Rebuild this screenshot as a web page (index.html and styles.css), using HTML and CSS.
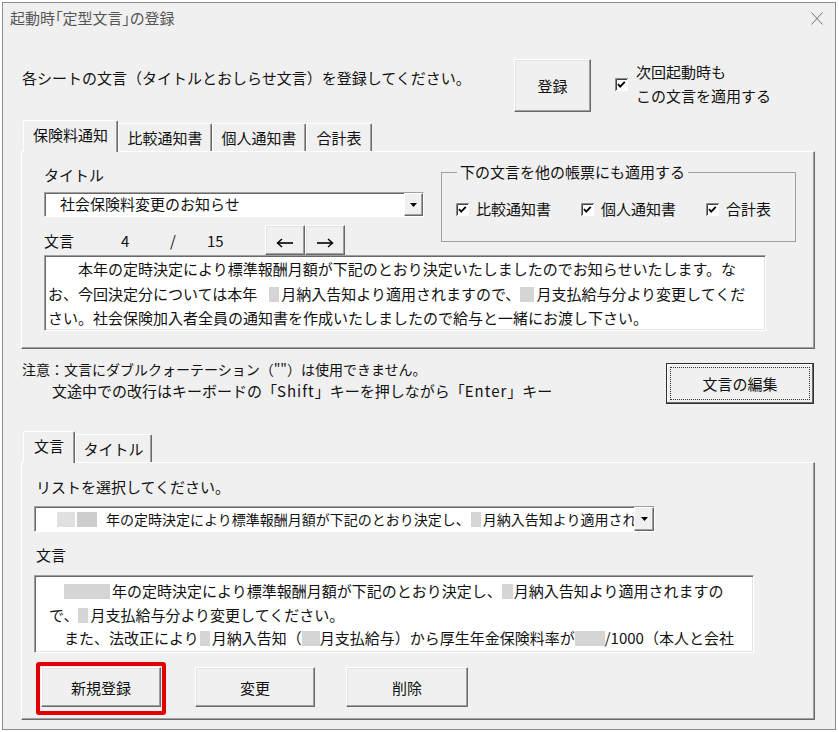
FILE: index.html
```html
<!DOCTYPE html>
<html lang="ja">
<head>
<meta charset="utf-8">
<title>起動時「定型文言」の登録</title>
<link rel="stylesheet" href="styles.css">
</head>
<body>
<div class="window">
  <div class="titlebar">
    <span class="title">起動時「定型文言」の登録</span>
    <svg class="close" width="12" height="13" viewBox="0 0 12 13"><path d="M0.5 0.5 L11.5 12.5 M11.5 0.5 L0.5 12.5" stroke="#707070" stroke-width="1" fill="none"/></svg>
  </div>

  <div class="toprow">
    <p class="lead">各シートの文言（タイトルとおしらせ文言）を登録してください。</p>
    <button class="btn btn-reg">登録</button>
    <div class="next">
      <svg class="cb" width="13" height="13" viewBox="0 0 13 13"><rect x="0" y="0" width="13" height="13" fill="#fff"/><path d="M0.5 13 V0.5 H13" stroke="#8a8a8a" fill="none"/><path d="M1.5 12 V1.5 H12" stroke="#404040" fill="none"/><path d="M3 6.2 L5.2 8.6 L9.8 3.8" stroke="#000" stroke-width="1.8" fill="none"/></svg>
      <div class="next-label">次回起動時も<br>この文言を適用する</div>
    </div>
  </div>

  <div class="tabs tabs1">
    <div class="tab sel w-hoken">保険料通知</div>
    <div class="tab w-hikaku">比較通知書</div>
    <div class="tab w-kojin">個人通知書</div>
    <div class="tab w-goukei">合計表</div>
  </div>
  <div class="panel panel1">
    <div class="p1-top">
      <div class="p1-left">
        <div class="lbl">タイトル</div>
        <div class="select title-select">
          <span class="select-text">社会保険料変更のお知らせ</span>
          <span class="drop"><svg width="7" height="4" viewBox="0 0 7 4"><polygon points="0,0 7,0 3.5,4" fill="#000"/></svg></span>
        </div>
        <div class="counter">
          <span class="c-label">文言</span><span class="c-cur">4</span><span class="c-sep">/</span><span class="c-total">15</span>
          <button class="btn arrow"><svg width="18" height="10" viewBox="0 0 18 10"><path d="M1.5 5 H17" stroke="#000" stroke-width="1.6" fill="none"/><path d="M6 1 L1.5 5 L6 9" stroke="#000" stroke-width="1.4" fill="none"/></svg></button><button class="btn arrow"><svg width="18" height="10" viewBox="0 0 18 10"><path d="M1 5 H16.5" stroke="#000" stroke-width="1.6" fill="none"/><path d="M12 1 L16.5 5 L12 9" stroke="#000" stroke-width="1.4" fill="none"/></svg></button>
        </div>
      </div>
      <fieldset class="group">
        <legend>下の文言を他の帳票にも適用する</legend>
        <div class="group-items">
          <label class="chk"><svg width="13" height="13" viewBox="0 0 13 13"><rect x="0" y="0" width="13" height="13" fill="#fff"/><path d="M0.5 13 V0.5 H13" stroke="#8a8a8a" fill="none"/><path d="M1.5 12 V1.5 H12" stroke="#404040" fill="none"/><path d="M3 6.2 L5.2 8.6 L9.8 3.8" stroke="#000" stroke-width="1.8" fill="none"/></svg>比較通知書</label>
          <label class="chk"><svg width="13" height="13" viewBox="0 0 13 13"><rect x="0" y="0" width="13" height="13" fill="#fff"/><path d="M0.5 13 V0.5 H13" stroke="#8a8a8a" fill="none"/><path d="M1.5 12 V1.5 H12" stroke="#404040" fill="none"/><path d="M3 6.2 L5.2 8.6 L9.8 3.8" stroke="#000" stroke-width="1.8" fill="none"/></svg>個人通知書</label>
          <label class="chk"><svg width="13" height="13" viewBox="0 0 13 13"><rect x="0" y="0" width="13" height="13" fill="#fff"/><path d="M0.5 13 V0.5 H13" stroke="#8a8a8a" fill="none"/><path d="M1.5 12 V1.5 H12" stroke="#404040" fill="none"/><path d="M3 6.2 L5.2 8.6 L9.8 3.8" stroke="#000" stroke-width="1.8" fill="none"/></svg>合計表</label>
        </div>
      </fieldset>
    </div>
    <div class="textbox tb1">
      <div class="line">　　本年の定時決定により標準報酬月額が下記のとおり決定いたしましたのでお知らせいたします。な</div>
      <div class="line">お、今回決定分については本年<span class="rd rd-a"></span>月納入告知より適用されますので、<span class="rd rd-b"></span>月支払給与分より変更してくだ</div>
      <div class="line">さい。社会保険加入者全員の通知書を作成いたしましたので給与と一緒にお渡し下さい。</div>
    </div>
  </div>

  <div class="note">
    <div class="note-text">
      <div class="note-l1">注意：文言にダブルクォーテーション（""）は使用できません。</div>
      <div>　　文途中での改行はキーボードの「<span class="lat">Shift</span>」キーを押しながら「<span class="lat">Enter</span>」キー</div>
    </div>
    <button class="btn btn-edit">文言の編集</button>
  </div>

  <div class="tabs tabs2">
    <div class="tab sel w-bungen">文言</div>
    <div class="tab w-title">タイトル</div>
  </div>
  <div class="panel panel2">
    <div class="lbl lbl-list">リストを選択してください。</div>
    <div class="select combo">
      <span class="select-text combo-text"><span class="rd rd-c1"></span><span class="rd rd-c2"></span>年の定時決定により標準報酬月額が下記のとおり決定し、<span class="rd rd-c3"></span>月納入告知より適用されますので</span>
      <span class="drop"><svg width="7" height="4" viewBox="0 0 7 4"><polygon points="0,0 7,0 3.5,4" fill="#000"/></svg></span>
    </div>
    <div class="lbl lbl-bun">文言</div>
    <div class="textbox tb2">
      <div class="line">　<span class="rd rd-d1"></span>年の定時決定により標準報酬月額が下記のとおり決定し、<span class="rd rd-d2"></span>月納入告知より適用されますの</div>
      <div class="line">で、<span class="rd rd-d3"></span>月支払給与分より変更してください。</div>
      <div class="line">　また、法改正により<span class="rd rd-d4"></span>月納入告知（<span class="rd rd-d5"></span>月支払給与）から厚生年金保険料率が<span class="rd rd-d6"></span>/1000（本人と会社</div>
    </div>
    <div class="actions">
      <div class="hl"><button class="btn act">新規登録</button></div>
      <button class="btn act act-change">変更</button>
      <button class="btn act act-del">削除</button>
    </div>
  </div>
</div>
</body>
</html>
```

FILE: styles.css
```css
* { box-sizing: border-box; }
html, body { margin: 0; padding: 0; background: #fff; }
body {
  font-family: "Noto Sans CJK JP", "Noto Sans", sans-serif;
  font-size: 15px;
  color: #111;
}
.window {
  width: 834px;
  height: 728px;
  margin: 2px 0 0 2px;
  border: 1px solid #8c8c8c;
  background: #f0f0f0;
}
.titlebar {
  height: 30px;
  display: flex;
  align-items: center;
  padding-left: 7px;
}
.title {
  font-size: 15px;
  line-height: 20px;
  color: #555;
  font-feature-settings: "palt";
}
.close { margin-left: auto; margin-right: 12px; }

.toprow {
  display: flex;
  margin-top: 26px;
  padding-left: 19px;
  height: 53px;
}
.lead {
  margin: 8px 0 0;
  flex: 0 0 492px;
  line-height: 22px;
}
.btn {
  font-family: inherit;
  font-size: 15px;
  color: #111;
  background: #f0f0f0;
  border: 1px solid;
  border-color: #fff #696969 #696969 #fff;
  box-shadow: inset -1px -1px 0 #a0a0a0, inset 1px 1px 0 #e3e3e3;
  padding: 0;
  margin: 0;
}
.btn-reg { width: 77px; height: 53px; flex: none; }
.next { display: flex; margin-left: 24px; }
.next .cb { margin-top: 19px; flex: none; }
.next-label { margin-left: 8px; margin-top: 1px; line-height: 24px; }

.tabs {
  display: flex;
  align-items: flex-end;
  margin-left: 20px;
  height: 31px;
}
.tabs1 { margin-top: 8px; }
.tabs2 { margin-top: 27px; }
.tab {
  height: 28px;
  padding-top: 3px;
  line-height: 22px;
  text-align: center;
  white-space: nowrap;
  background: #f0f0f0;
  border-top: 1px solid #fff;
  border-left: 1px solid #fff;
  border-right: 1px solid #696969;
  box-shadow: inset -1px 0 0 #a0a0a0;
  border-radius: 2px 2px 0 0;
}
.tab.sel {
  height: 32px;
  margin-bottom: -1px;
  position: relative;
  z-index: 1;
}
.w-hoken { width: 95px; }
.w-hikaku { width: 94px; }
.w-kojin { width: 94px; }
.w-goukei { width: 66px; }
.w-bungen { width: 52px; }
.w-title { width: 77px; }

.panel {
  margin-left: 18px;
  width: 794px;
  background: #f0f0f0;
  border-top: 1px solid #fff;
  border-left: 1px solid #fff;
  border-right: 1px solid #696969;
  border-bottom: 1px solid #696969;
  box-shadow: inset -1px -1px 0 #a0a0a0;
}
.panel1 { height: 198px; }
.panel2 { height: 258px; padding-left: 12px; }

.p1-top { display: flex; padding-left: 22px; }
.p1-left { width: 380px; padding-top: 13px; flex: none; }
.lbl { line-height: 20px; }

.select {
  display: flex;
  background: #fff;
  border: 1px solid;
  border-color: #a0a0a0 #fff #fff #a0a0a0;
  box-shadow: inset 1px 1px 0 #696969;
}
.select-text {
  flex: 1;
  overflow: hidden;
  white-space: nowrap;
  line-height: 22px;
}
.title-select { margin-top: 7px; height: 25px; }
.title-select .select-text { padding-left: 15px; }
.drop {
  flex: none;
  width: 19px;
  display: flex;
  align-items: center;
  justify-content: center;
  background: #f0f0f0;
  border: 1px solid;
  border-color: #fff #696969 #696969 #fff;
  box-shadow: inset -1px -1px 0 #a0a0a0;
}

.counter {
  display: flex;
  align-items: center;
  height: 28px;
  margin-top: 10px;
  line-height: 20px;
}
.c-label { width: 77px; }
.c-cur { width: 49px; }
.c-sep { width: 37px; }
.c-total { width: 58px; }
.arrow {
  width: 40px;
  height: 30px;
  align-self: flex-end;
  display: flex;
  align-items: center;
  justify-content: center;
  padding-top: 5px;
}

.group {
  margin: 10px 0 0 17px;
  width: 355px;
  height: 80px;
  padding: 0;
  border: 1px solid #a0a0a0;
}
.group legend {
  margin-left: 15px;
  padding: 0 3px;
  line-height: 20px;
}
.group-items {
  display: flex;
  gap: 30px;
  margin-top: 17px;
  padding-left: 14px;
  line-height: 20px;
}
.chk { display: flex; align-items: center; gap: 7px; white-space: nowrap; }

.textbox {
  background: #fff;
  border: 1px solid;
  border-color: #a0a0a0 #fff #fff #a0a0a0;
  box-shadow: inset 1px 1px 0 #696969, inset -1px -1px 0 #e3e3e3;
  overflow: hidden;
  white-space: nowrap;
}
.tb1 {
  margin-left: 22px;
  width: 722px;
  height: 76px;
  padding: 1px 0 0 3px;
  line-height: 24.5px;
}
.rd {
  display: inline-block;
  height: 15px;
  vertical-align: -2px;
  background: #d5d5d5;
}
.rd-a { width: 10px; margin: 0 2px 0 12px; }
.rd-b { width: 14px; margin-right: 2px; }

.note {
  display: flex;
  margin-top: 9px;
  padding-left: 19px;
}
.note-text { line-height: 22px; white-space: nowrap; }
.note-l1 { font-size: 14px; }
.lat { letter-spacing: 1px; }
.btn-edit {
  margin: 5px 21px 0 auto;
  width: 148px;
  height: 41px;
  border: 1px solid #303030;
  box-shadow: inset -1px -1px 0 #696969, inset 1px 1px 0 #fff;
  outline: 1px dotted #333;
  outline-offset: -5px;
}

.lbl-list { margin-top: 14px; padding-left: 2px; }
.combo { margin-top: 9px; width: 621px; height: 26px; }
.combo-text { padding-left: 22px; line-height: 24px; font-size: 14px; }
.rd-c1 { width: 18px; background: #e0e0e0; margin-right: 2px; }
.rd-c2 { width: 20px; background: #cdcdcd; margin-right: 9px; }
.rd-c3 { width: 10px; margin: 0 2px 0 1px; }
.combo .drop { width: 20px; }
.lbl-bun { margin-top: 13px; padding-left: 2px; }
.tb2 {
  margin-top: 10px;
  width: 720px;
  height: 78px;
  padding: 3px 0 0 14px;
  line-height: 23.5px;
}
.rd-d1 { width: 46px; margin-right: 2px; }
.rd-d2 { width: 11px; margin-right: 1px; }
.rd-d3 { width: 10px; margin-right: 2px; }
.rd-d4 { width: 10px; margin: 0 2px 0 1px; }
.rd-d5 { width: 18px; margin-right: 0; }
.rd-d6 { width: 30px; }

.actions {
  display: flex;
  margin-top: 14px;
  padding-left: 7px;
}
.act { width: 120px; height: 40px; }
.act-change { margin-left: 34px; }
.act-del { margin-left: 31px; width: 122px; }
.hl { position: relative; }
.hl::after {
  content: "";
  position: absolute;
  top: -5px;
  left: -5px;
  right: -5px;
  bottom: -8px;
  border: 4px solid #e20000;
  border-radius: 3px;
}
```
